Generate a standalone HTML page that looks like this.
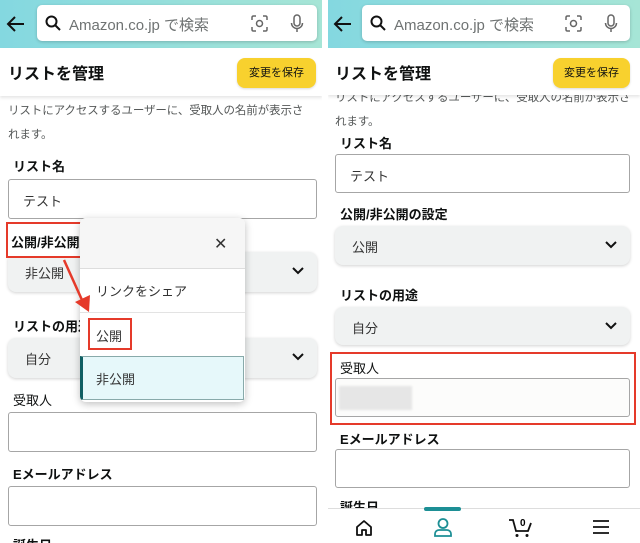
<!DOCTYPE html>
<html><head><meta charset="utf-8"><style>
*{box-sizing:border-box;margin:0;padding:0}
body{width:640px;height:543px;position:relative;overflow:hidden;background:#fff;font-family:"Liberation Sans","Noto Sans CJK JP",sans-serif;color:#0f1111}
.a{position:absolute}
.hdr{height:48px;background:linear-gradient(90deg,#84d8e0,#a6e5d6)}
.sb{background:#fff;border-radius:5px;height:36px;top:5px;box-shadow:0 1px 3px rgba(0,0,0,.2)}
.ph{color:#6f7373;font-size:15px;top:9px;left:32px}
.tb{height:48px;top:48px;background:#fff;box-shadow:0 2px 3px rgba(0,0,0,.1)}
.tt{font-size:16px;font-weight:bold;top:12px}
.btn{background:#f8d12e;border-radius:8px;height:30px;top:10px;width:79px;font-size:11px;text-align:center;line-height:30px;box-shadow:0 1px 2px rgba(0,0,0,.15)}
.lb{font-size:13px;font-weight:bold}
.in{border:1px solid #a6a6a6;border-radius:3px;background:#fff;height:40px;font-size:13px;padding:11px 0 0 14px;color:#333}
.sel{background:#f0f2f2;border-radius:8px;height:40px;font-size:13px;padding:11px 0 0 17px;color:#333;box-shadow:0 1px 3px rgba(0,0,0,.18)}
.sel svg{position:absolute;right:12px;top:14px}
.desc{font-size:11.5px;color:#565959;line-height:24px;white-space:nowrap;letter-spacing:-0.1px}
.red{border:2px solid #e53a2a}
</style></head><body>
<!-- LEFT PANEL -->
<div class="a" style="left:0;top:0;width:322px;height:543px;overflow:hidden">
<div class="a hdr" style="left:0;top:0;width:322px"></div>
<svg class="a" style="left:6px;top:15px" width="20" height="18" viewBox="0 0 20 18"><path d="M18 9H3M9 2L2 9l7 7" stroke="#111" stroke-width="2" fill="none"/></svg>
<div class="a sb" style="left:37px;width:280px">
<svg class="a" style="left:8px;top:10px" width="16" height="16" viewBox="0 0 16 16"><circle cx="6.5" cy="6.5" r="5" stroke="#111" stroke-width="2" fill="none"/><path d="M10.5 10.5L15 15" stroke="#111" stroke-width="2"/></svg>
<div class="a ph">Amazon.co.jp で検索</div>
<svg class="a" style="left:214px;top:10px" width="17" height="17" viewBox="0 0 17 17"><path d="M1 5V2.5Q1 1 2.5 1H5M12 1h2.5Q16 1 16 2.5V5M16 12v2.5Q16 16 14.5 16H12M5 16H2.5Q1 16 1 14.5V12" stroke="#666" stroke-width="1.5" fill="none"/><circle cx="8.5" cy="8.5" r="3" stroke="#666" stroke-width="1.5" fill="none"/></svg>
<svg class="a" style="left:253px;top:9px" width="14" height="19" viewBox="0 0 14 19"><rect x="4" y="1" width="6" height="11" rx="3" stroke="#666" stroke-width="1.5" fill="none"/><path d="M1.5 9a5.5 5.5 0 0 0 11 0M7 14.5V18" stroke="#666" stroke-width="1.5" fill="none"/></svg>
</div>
<div class="a tb" style="left:0;width:322px"><div class="a tt" style="left:8px">リストを管理</div><div class="a btn" style="left:237px">変更を保存</div></div>
<div class="a desc" style="left:8px;top:99px">リストにアクセスするユーザーに、受取人の名前が表示さ<br>れます。</div>
<div class="a lb" style="left:13px;top:156px">リスト名</div>
<div class="a in" style="left:8px;top:179px;width:309px">テスト</div>
<div class="a sel" style="left:8px;top:252px;width:309px">非公開<svg width="14" height="10" viewBox="0 0 14 10"><path d="M2 2l5 5 5-5" stroke="#111" stroke-width="2" fill="none"/></svg></div>
<div class="a lb" style="left:13px;top:316px">リストの用途</div>
<div class="a sel" style="left:8px;top:338px;width:309px">自分<svg width="14" height="10" viewBox="0 0 14 10"><path d="M2 2l5 5 5-5" stroke="#111" stroke-width="2" fill="none"/></svg></div>
<div class="a lb" style="left:13px;top:390px;font-weight:normal">受取人</div>
<div class="a in" style="left:8px;top:412px;width:309px"></div>
<div class="a lb" style="left:13px;top:464px">Eメールアドレス</div>
<div class="a in" style="left:8px;top:486px;width:309px"></div>
<div class="a lb" style="left:13px;top:535px">誕生日</div>
<div class="a" style="left:8px;top:226px;width:72px;height:30px;background:#fff"></div>
<div class="a lb" style="left:11px;top:232px;width:68px;overflow:hidden;white-space:nowrap">公開/非公開</div>
<div class="a red" style="left:6px;top:222px;width:82px;height:36px"></div>
<div class="a" style="left:80px;top:218px;width:165px;height:184px;background:#fff;border-radius:6px;box-shadow:0 2px 8px rgba(0,0,0,.25);overflow:hidden">
<div class="a" style="left:0;top:0;width:165px;height:51px;background:#f6f6f6;border-bottom:1px solid #ddd"></div>
<div class="a" style="left:134px;top:16px;font-size:16px;color:#333">✕</div>
<div class="a" style="left:16px;top:63px;font-size:13px;color:#333">リンクをシェア</div>
<div class="a" style="left:0;top:94px;width:165px;border-top:1px solid #e3e3e3"></div>
<div class="a" style="left:16px;top:108px;font-size:13px;color:#333">公開</div>
<div class="a" style="left:0;top:138px;width:164px;height:44px;background:#e6f8fa;border:1px solid #8aa;border-left:3px solid #0f5f63"></div>
<div class="a" style="left:16px;top:151px;font-size:13px;color:#333">非公開</div>
</div>
<div class="a red" style="left:88px;top:318px;width:44px;height:32px"></div>
<svg class="a" style="left:55px;top:255px" width="45" height="65" viewBox="0 0 45 65"><path d="M9 5L27 45" stroke="#e53a2a" stroke-width="2.5"/><path d="M20 47l14 10 1-17z" fill="#e53a2a"/></svg>
</div>
<!-- RIGHT PANEL -->
<div class="a" style="left:328px;top:0;width:312px;height:543px;overflow:hidden">
<div class="a hdr" style="left:0;top:0;width:312px"></div>
<svg class="a" style="left:5px;top:15px" width="20" height="18" viewBox="0 0 20 18"><path d="M18 9H3M9 2L2 9l7 7" stroke="#111" stroke-width="2" fill="none"/></svg>
<div class="a sb" style="left:34px;width:268px">
<svg class="a" style="left:8px;top:10px" width="16" height="16" viewBox="0 0 16 16"><circle cx="6.5" cy="6.5" r="5" stroke="#111" stroke-width="2" fill="none"/><path d="M10.5 10.5L15 15" stroke="#111" stroke-width="2"/></svg>
<div class="a ph">Amazon.co.jp で検索</div>
<svg class="a" style="left:203px;top:10px" width="17" height="17" viewBox="0 0 17 17"><path d="M1 5V2.5Q1 1 2.5 1H5M12 1h2.5Q16 1 16 2.5V5M16 12v2.5Q16 16 14.5 16H12M5 16H2.5Q1 16 1 14.5V12" stroke="#666" stroke-width="1.5" fill="none"/><circle cx="8.5" cy="8.5" r="3" stroke="#666" stroke-width="1.5" fill="none"/></svg>
<svg class="a" style="left:242px;top:9px" width="14" height="19" viewBox="0 0 14 19"><rect x="4" y="1" width="6" height="11" rx="3" stroke="#666" stroke-width="1.5" fill="none"/><path d="M1.5 9a5.5 5.5 0 0 0 11 0M7 14.5V18" stroke="#666" stroke-width="1.5" fill="none"/></svg>
</div>
<div class="a desc" style="left:7px;top:86px">リストにアクセスするユーザーに、受取人の名前が表示さ<br>れます。</div>
<div class="a tb" style="left:0;width:312px;top:48px;height:47px"><div class="a tt" style="left:7px">リストを管理</div><div class="a btn" style="left:225px;width:77px">変更を保存</div></div>
<div class="a lb" style="left:12px;top:133px">リスト名</div>
<div class="a in" style="left:7px;top:154px;width:295px;height:39px">テスト</div>
<div class="a lb" style="left:12px;top:204px">公開/非公開の設定</div>
<div class="a sel" style="left:7px;top:226px;width:295px;height:39px">公開<svg width="14" height="10" viewBox="0 0 14 10"><path d="M2 2l5 5 5-5" stroke="#111" stroke-width="2" fill="none"/></svg></div>
<div class="a lb" style="left:12px;top:285px">リストの用途</div>
<div class="a sel" style="left:7px;top:307px;width:295px;height:38px">自分<svg width="14" height="10" viewBox="0 0 14 10"><path d="M2 2l5 5 5-5" stroke="#111" stroke-width="2" fill="none"/></svg></div>
<div class="a lb" style="left:12px;top:358px;font-weight:normal">受取人</div>
<div class="a in" style="left:7px;top:378px;width:295px;height:39px;background:#fcfcfb"></div>
<div class="a" style="left:11px;top:386px;width:73px;height:24px;background:#e6e6e6;filter:blur(1px)"></div>
<div class="a red" style="left:2px;top:352px;width:306px;height:73px"></div>
<div class="a lb" style="left:12px;top:429px">Eメールアドレス</div>
<div class="a in" style="left:7px;top:449px;width:295px;height:39px"></div>
<div class="a lb" style="left:12px;top:497px">誕生日</div>
<div class="a" style="left:0;top:508px;width:312px;height:35px;background:#fff;border-top:1px solid #ddd"></div>
<div class="a" style="left:96px;top:507px;width:37px;height:4px;background:#1d8f95;border-radius:2px"></div>
<svg class="a" style="left:27px;top:519px" width="18" height="18" viewBox="0 0 18 18"><path d="M2 8L9 2l7 6v8H11v-5H7v5H2z" stroke="#111" stroke-width="1.8" fill="none" stroke-linejoin="round"/></svg>
<svg class="a" style="left:105px;top:517px" width="20" height="20" viewBox="0 0 20 20"><circle cx="10" cy="6.5" r="4.5" stroke="#1d8f95" stroke-width="1.8" fill="none"/><path d="M2 19v-2a4 4 0 0 1 4-4h8a4 4 0 0 1 4 4v2z" stroke="#1d8f95" stroke-width="1.8" fill="none"/></svg>
<svg class="a" style="left:180px;top:516px" width="26" height="22" viewBox="0 0 26 22"><path d="M1 4h4l3 11h12l3-8" stroke="#111" stroke-width="1.8" fill="none"/><circle cx="9" cy="19.5" r="1.5" fill="#111"/><circle cx="19" cy="19.5" r="1.5" fill="#111"/><text x="12" y="10" font-size="10" font-weight="bold" font-family="Liberation Sans">0</text></svg>
<svg class="a" style="left:264px;top:519px" width="18" height="16" viewBox="0 0 18 16"><path d="M1 2h16M1 8h16M1 14h16" stroke="#111" stroke-width="1.8"/></svg>
</div>
</body></html>
